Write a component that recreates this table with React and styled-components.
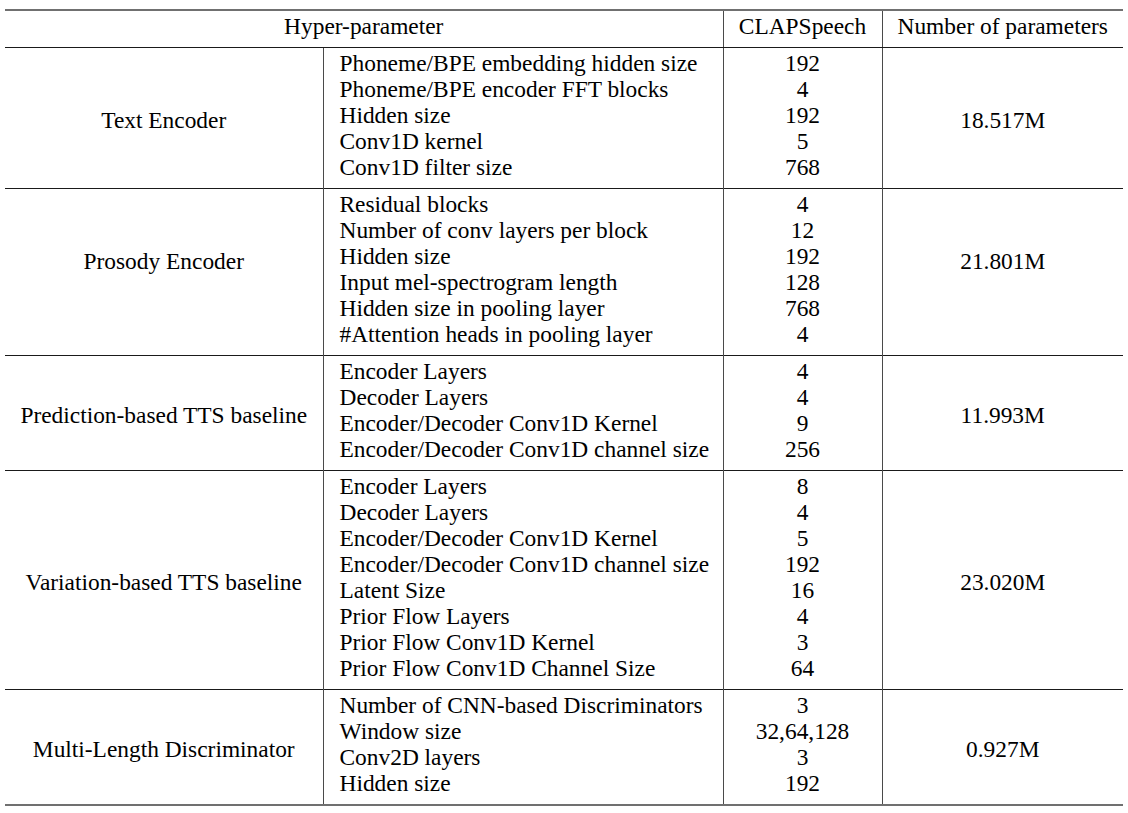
import styled, { createGlobalStyle } from "styled-components";

const GlobalStyle = createGlobalStyle`
  body {
    margin: 0;
    background: #fff;
  }
`;

// span = how many of the parameter lines the side labels are centred on
const groups = [
  {
    name: "Text Encoder",
    span: 5,
    params: [
      ["Phoneme/BPE embedding hidden size", "192"],
      ["Phoneme/BPE encoder FFT blocks", "4"],
      ["Hidden size", "192"],
      ["Conv1D kernel", "5"],
      ["Conv1D filter size", "768"],
    ],
    total: "18.517M",
  },
  {
    name: "Prosody Encoder",
    span: 5,
    params: [
      ["Residual blocks", "4"],
      ["Number of conv layers per block", "12"],
      ["Hidden size", "192"],
      ["Input mel-spectrogram length", "128"],
      ["Hidden size in pooling layer", "768"],
      ["#Attention heads in pooling layer", "4"],
    ],
    total: "21.801M",
  },
  {
    name: "Prediction-based TTS baseline",
    span: 4,
    params: [
      ["Encoder Layers", "4"],
      ["Decoder Layers", "4"],
      ["Encoder/Decoder Conv1D Kernel", "9"],
      ["Encoder/Decoder Conv1D channel size", "256"],
    ],
    total: "11.993M",
  },
  {
    name: "Variation-based TTS baseline",
    span: 8,
    params: [
      ["Encoder Layers", "8"],
      ["Decoder Layers", "4"],
      ["Encoder/Decoder Conv1D Kernel", "5"],
      ["Encoder/Decoder Conv1D channel size", "192"],
      ["Latent Size", "16"],
      ["Prior Flow Layers", "4"],
      ["Prior Flow Conv1D Kernel", "3"],
      ["Prior Flow Conv1D Channel Size", "64"],
    ],
    total: "23.020M",
  },
  {
    name: "Multi-Length Discriminator",
    span: 4,
    params: [
      ["Number of CNN-based Discriminators", "3"],
      ["Window size", "32,64,128"],
      ["Conv2D layers", "3"],
      ["Hidden size", "192"],
    ],
    total: "0.927M",
  },
];

export default function App() {
  return (
    <>
      <GlobalStyle />
      <Page>
        <Table>
          <colgroup>
            <col style={{ width: 318 }} />
            <col style={{ width: 400 }} />
            <col style={{ width: 159 }} />
            <col style={{ width: 241 }} />
          </colgroup>
          <thead>
            <tr>
              <HeadCell colSpan={2}>Hyper-parameter</HeadCell>
              <HeadCell $divider>CLAPSpeech</HeadCell>
              <HeadCell $divider>Number of parameters</HeadCell>
            </tr>
          </thead>
          <tbody>
            {groups.map((g) => (
              <Row key={g.name}>
                <SideCell $span={g.span}>{g.name}</SideCell>
                <Cell $divider $align="left">
                  {g.params.map(([label]) => (
                    <Line key={label}>{label}</Line>
                  ))}
                </Cell>
                <Cell $divider>
                  {g.params.map(([label, value]) => (
                    <Line key={label}>{value}</Line>
                  ))}
                </Cell>
                <SideCell $divider $span={g.span}>{g.total}</SideCell>
              </Row>
            ))}
          </tbody>
        </Table>
      </Page>
    </>
  );
}

const serif = `"Liberation Serif", "Times New Roman", serif`;

const Page = styled.div`
  padding: 9px 5px 0;
`;

const Table = styled.table`
  width: 1118px;
  border-collapse: collapse;
  table-layout: fixed;
  font-family: ${serif};
  font-size: 23.4px;
  color: #000;
  border-top: 2px solid #707070;
  border-bottom: 2px solid #707070;
`;

const HeadCell = styled.th`
  font-family: ${serif};
  font-size: 23.4px;
  font-weight: normal;
  text-align: center;
  padding: 2px 0 8px;
  line-height: 26px;
  border-bottom: 1px solid #1a1a1a;
  border-left: ${(p) => (p.$divider ? "1px solid #4a4a4a" : "none")};
`;

const Row = styled.tr`
  border-bottom: 1px solid #1a1a1a;
  &:last-child {
    border-bottom: 2px solid #707070;
  }
`;

const Cell = styled.td`
  font-family: ${serif};
  font-size: 23.4px;
  vertical-align: top;
  text-align: ${(p) => p.$align || "center"};
  padding: ${(p) => (p.$align === "left" ? "2px 0 8px 16px" : "2px 0 8px")};
  line-height: 26px;
  border-left: ${(p) => (p.$divider ? "1px solid #4a4a4a" : "none")};
`;

const SideCell = styled(Cell)`
  padding-top: ${(p) => 7 + (p.$span - 1) * 13}px;
  padding-bottom: 0;
`;

const Line = styled.div`
  white-space: nowrap;
`;
